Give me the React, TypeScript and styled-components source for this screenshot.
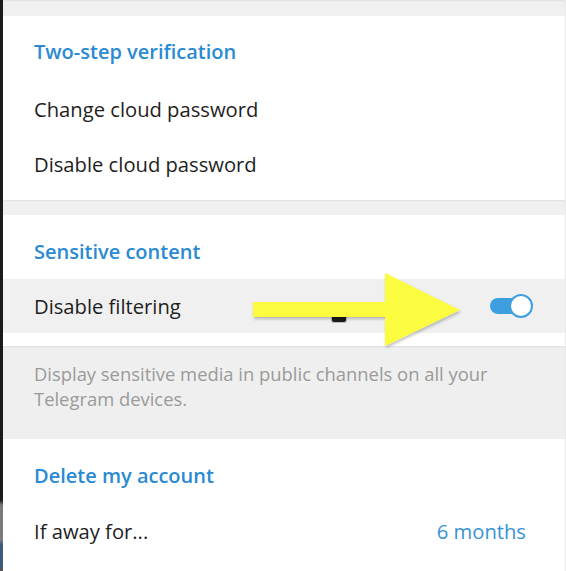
import React from "react";
import styled, { createGlobalStyle } from "styled-components";

const Global = createGlobalStyle`
  html, body { margin: 0; padding: 0; background: #f0f0f0; }
  body { font-family: "Open Sans", "Noto Sans", sans-serif; -webkit-font-smoothing: antialiased; }
`;

const Page = styled.div`
  position: relative;
  display: flex;
  width: 566px;
  height: 571px;
  overflow: hidden;
  background: #f0f0f0;
`;

const EdgeStrip = styled.div`
  width: 3px;
  flex: none;
  background: linear-gradient(
    to bottom,
    #1b1b1b 0px,
    #1b1b1b 500px,
    #7a7a7a 505px,
    #7a7a7a 540px,
    #3d5a80 545px,
    #3d5a80 565px,
    #555 571px
  );
`;

const Column = styled.div`
  flex: 1;
  display: flex;
  flex-direction: column;
  border-right: 1px solid #e9e9e9;
`;

const Gap = styled.div<{ $h: number }>`
  height: ${(p) => p.$h}px;
  flex: none;
  background: #f0f0f0;
  box-shadow: inset 0 2px 2px -1px rgba(0, 0, 0, 0.07);
`;

const Section = styled.section<{ $pt: number; $pb: number; $grow?: boolean }>`
  background: #ffffff;
  padding: ${(p) => p.$pt}px 0 ${(p) => p.$pb}px;
  flex: ${(p) => (p.$grow ? 1 : "none")};
`;

const Header = styled.div<{ $mb: number }>`
  padding: 0 31px;
  font-size: 20px;
  font-weight: 600;
  line-height: 28px;
  color: #2a8ad2;
  margin-bottom: ${(p) => p.$mb}px;
`;

const Row = styled.div<{ $h: number; $active?: boolean }>`
  display: flex;
  align-items: center;
  justify-content: space-between;
  height: ${(p) => p.$h}px;
  padding: 0 39px 0 31px;
  background: ${(p) => (p.$active ? "#f0f0f0" : "#ffffff")};
  font-size: 20.2px;
  color: #1e1e1e;
`;

const Value = styled.span`
  color: #3693d6;
  font-size: 20.2px;
`;

const About = styled.div`
  padding: 15px 31px 28px;
  font-size: 18.4px;
  line-height: 25px;
  color: #9a9a9a;
  background: #efefef;
  box-shadow: inset 0 2px 2px -1px rgba(0, 0, 0, 0.07);
  white-space: nowrap;
`;

const Toggle = styled.div<{ $on: boolean }>`
  position: relative;
  width: 42px;
  height: 24px;
  margin-right: -6px;
  &::before {
    content: "";
    position: absolute;
    left: 0;
    top: 4px;
    width: 40px;
    height: 16px;
    border-radius: 8px;
    background: ${(p) => (p.$on ? "#3d9fe0" : "#c8c8c8")};
  }
  &::after {
    content: "";
    position: absolute;
    top: 0;
    left: ${(p) => (p.$on ? "19px" : "0")};
    width: 20px;
    height: 20px;
    border-radius: 50%;
    background: #ffffff;
    border: 2px solid ${(p) => (p.$on ? "#3d9fe0" : "#c8c8c8")};
  }
`;

const ArrowOverlay = styled.svg`
  position: absolute;
  left: 250px;
  top: 268px;
  width: 218px;
  height: 86px;
  overflow: visible;
  pointer-events: none;
`;

const CursorMark = styled.div`
  position: absolute;
  left: 331px;
  top: 315px;
  width: 14px;
  height: 7px;
  border-radius: 0 0 3px 3px;
  background: #1a1a1a;
  border: 1px solid #bdbdbd;
  border-top: none;
`;

export default function App() {
  return (
    <>
      <Global />
      <Page>
        <EdgeStrip />
        <Column>
          <Gap $h={16} />
          <Section $pt={22} $pb={9}>
            <Header $mb={15}>Two-step verification</Header>
            <Row $h={55}>Change cloud password</Row>
            <Row $h={55}>Disable cloud password</Row>
          </Section>
          <Gap $h={15} />
          <Section $pt={23} $pb={13}>
            <Header $mb={13}>Sensitive content</Header>
            <Row $h={54} $active>
              <span>Disable filtering</span>
              <Toggle $on />
            </Row>
          </Section>
          <About>
            Display sensitive media in public channels on all your
            <br />
            Telegram devices.
          </About>
          <Section $pt={23} $pb={0} $grow>
            <Header $mb={14}>Delete my account</Header>
            <Row $h={54}>
              <span>If away for...</span>
              <Value>6 months</Value>
            </Row>
          </Section>
        </Column>
        <CursorMark />
        <ArrowOverlay viewBox="0 0 218 86">
          <defs>
            <filter id="sh" x="-10%" y="-10%" width="130%" height="140%">
              <feDropShadow dx="1" dy="2" stdDeviation="1.5" floodColor="#000" floodOpacity="0.25" />
            </filter>
          </defs>
          <polygon
            points="3,34 135,34 135,5 210,42 135,78 135,49 3,49"
            fill="#fbfb3f"
            filter="url(#sh)"
          />
        </ArrowOverlay>
      </Page>
    </>
  );
}
